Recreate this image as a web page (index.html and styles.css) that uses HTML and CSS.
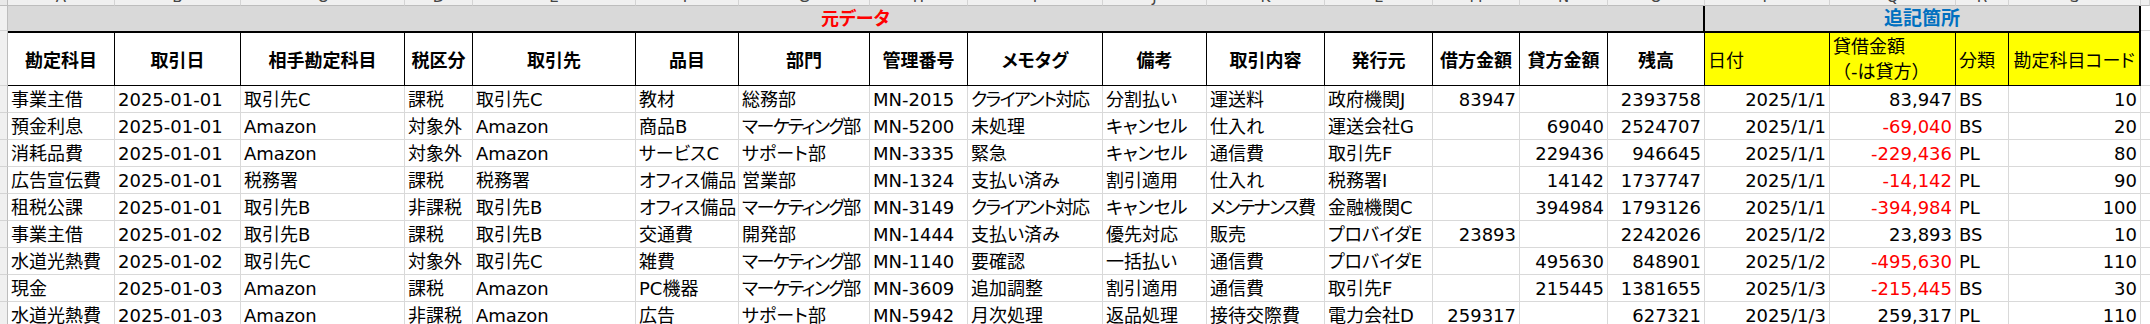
FILE: index.html
```html
<!DOCTYPE html>
<html lang="ja">
<head>
<meta charset="utf-8">
<title>Sheet</title>
<link rel="stylesheet" href="styles.css">
</head>
<body>
<div class="sheet">
  <div class="corner"></div>
  <div class="ch"><span>A</span></div><div class="ch"><span>B</span></div><div class="ch"><span>C</span></div><div class="ch"><span>D</span></div><div class="ch"><span>E</span></div><div class="ch"><span>F</span></div><div class="ch"><span>G</span></div><div class="ch"><span>H</span></div><div class="ch"><span>I</span></div><div class="ch"><span>J</span></div><div class="ch"><span>K</span></div><div class="ch"><span>L</span></div><div class="ch"><span>M</span></div><div class="ch"><span>N</span></div><div class="ch"><span>O</span></div><div class="ch"><span>P</span></div><div class="ch"><span>Q</span></div><div class="ch"><span>R</span></div><div class="ch"><span>S</span></div><div class="ch"></div>

  <div class="rh"></div>
  <div class="band band-main">元データ</div>
  <div class="band band-add">追記箇所</div>
  <div class="tail"></div>

  <div class="rh"></div>
  <div class="hd">勘定科目</div><div class="hd">取引日</div><div class="hd">相手勘定科目</div><div class="hd">税区分</div><div class="hd">取引先</div><div class="hd">品目</div><div class="hd">部門</div><div class="hd">管理番号</div><div class="hd">メモタグ</div><div class="hd">備考</div><div class="hd">取引内容</div><div class="hd">発行元</div><div class="hd">借方金額</div><div class="hd">貸方金額</div><div class="hd">残高</div>
  <div class="hd y">日付</div><div class="hd y"><span class="two">貸借金額<br>（-は貸方）</span></div><div class="hd y">分類</div><div class="hd y ctr last">勘定科目コード</div>
  <div class="tail"></div>

  <div class="rh"></div>
  <div class="c">事業主借</div><div class="c">2025-01-01</div><div class="c">取引先C</div><div class="c">課税</div><div class="c">取引先C</div><div class="c">教材</div><div class="c">総務部</div><div class="c">MN-2015</div><div class="c k">クライアント対応</div><div class="c">分割払い</div><div class="c">運送料</div><div class="c">政府機関J</div><div class="c r">83947</div><div class="c r"></div><div class="c r">2393758</div><div class="c r">2025/1/1</div><div class="c r">83,947</div><div class="c">BS</div><div class="c r">10</div>
  <div class="tail"></div>

  <div class="rh"></div>
  <div class="c">預金利息</div><div class="c">2025-01-01</div><div class="c">Amazon</div><div class="c">対象外</div><div class="c">Amazon</div><div class="c">商品B</div><div class="c k">マーケティング部</div><div class="c">MN-5200</div><div class="c">未処理</div><div class="c">キャンセル</div><div class="c">仕入れ</div><div class="c">運送会社G</div><div class="c r"></div><div class="c r">69040</div><div class="c r">2524707</div><div class="c r">2025/1/1</div><div class="c r neg">-69,040</div><div class="c">BS</div><div class="c r">20</div>
  <div class="tail"></div>

  <div class="rh"></div>
  <div class="c">消耗品費</div><div class="c">2025-01-01</div><div class="c">Amazon</div><div class="c">対象外</div><div class="c">Amazon</div><div class="c">サービスC</div><div class="c">サポート部</div><div class="c">MN-3335</div><div class="c">緊急</div><div class="c">キャンセル</div><div class="c">通信費</div><div class="c">取引先F</div><div class="c r"></div><div class="c r">229436</div><div class="c r">946645</div><div class="c r">2025/1/1</div><div class="c r neg">-229,436</div><div class="c">PL</div><div class="c r">80</div>
  <div class="tail"></div>

  <div class="rh"></div>
  <div class="c">広告宣伝費</div><div class="c">2025-01-01</div><div class="c">税務署</div><div class="c">課税</div><div class="c">税務署</div><div class="c">オフィス備品</div><div class="c">営業部</div><div class="c">MN-1324</div><div class="c">支払い済み</div><div class="c">割引適用</div><div class="c">仕入れ</div><div class="c">税務署I</div><div class="c r"></div><div class="c r">14142</div><div class="c r">1737747</div><div class="c r">2025/1/1</div><div class="c r neg">-14,142</div><div class="c">PL</div><div class="c r">90</div>
  <div class="tail"></div>

  <div class="rh"></div>
  <div class="c">租税公課</div><div class="c">2025-01-01</div><div class="c">取引先B</div><div class="c">非課税</div><div class="c">取引先B</div><div class="c">オフィス備品</div><div class="c k">マーケティング部</div><div class="c">MN-3149</div><div class="c k">クライアント対応</div><div class="c">キャンセル</div><div class="c k">メンテナンス費</div><div class="c">金融機関C</div><div class="c r"></div><div class="c r">394984</div><div class="c r">1793126</div><div class="c r">2025/1/1</div><div class="c r neg">-394,984</div><div class="c">PL</div><div class="c r">100</div>
  <div class="tail"></div>

  <div class="rh"></div>
  <div class="c">事業主借</div><div class="c">2025-01-02</div><div class="c">取引先B</div><div class="c">課税</div><div class="c">取引先B</div><div class="c">交通費</div><div class="c">開発部</div><div class="c">MN-1444</div><div class="c">支払い済み</div><div class="c">優先対応</div><div class="c">販売</div><div class="c">プロバイダE</div><div class="c r">23893</div><div class="c r"></div><div class="c r">2242026</div><div class="c r">2025/1/2</div><div class="c r">23,893</div><div class="c">BS</div><div class="c r">10</div>
  <div class="tail"></div>

  <div class="rh"></div>
  <div class="c">水道光熱費</div><div class="c">2025-01-02</div><div class="c">取引先C</div><div class="c">対象外</div><div class="c">取引先C</div><div class="c">雑費</div><div class="c k">マーケティング部</div><div class="c">MN-1140</div><div class="c">要確認</div><div class="c">一括払い</div><div class="c">通信費</div><div class="c">プロバイダE</div><div class="c r"></div><div class="c r">495630</div><div class="c r">848901</div><div class="c r">2025/1/2</div><div class="c r neg">-495,630</div><div class="c">PL</div><div class="c r">110</div>
  <div class="tail"></div>

  <div class="rh"></div>
  <div class="c">現金</div><div class="c">2025-01-03</div><div class="c">Amazon</div><div class="c">課税</div><div class="c">Amazon</div><div class="c">PC機器</div><div class="c k">マーケティング部</div><div class="c">MN-3609</div><div class="c">追加調整</div><div class="c">割引適用</div><div class="c">通信費</div><div class="c">取引先F</div><div class="c r"></div><div class="c r">215445</div><div class="c r">1381655</div><div class="c r">2025/1/3</div><div class="c r neg">-215,445</div><div class="c">BS</div><div class="c r">30</div>
  <div class="tail"></div>

  <div class="rh"></div>
  <div class="c">水道光熱費</div><div class="c">2025-01-03</div><div class="c">Amazon</div><div class="c">非課税</div><div class="c">Amazon</div><div class="c">広告</div><div class="c">サポート部</div><div class="c">MN-5942</div><div class="c">月次処理</div><div class="c">返品処理</div><div class="c">接待交際費</div><div class="c">電力会社D</div><div class="c r">259317</div><div class="c r"></div><div class="c r">627321</div><div class="c r">2025/1/3</div><div class="c r">259,317</div><div class="c">PL</div><div class="c r">110</div>
  <div class="tail"></div>
</div>
</body>
</html>
```

FILE: styles.css
```css
* {
  box-sizing: border-box;
}

html,
body {
  margin: 0;
  padding: 0;
  background: #ffffff;
}

body {
  width: 2150px;
  height: 324px;
  overflow: hidden;
  font-family: "DejaVu Sans", "Noto Sans CJK JP", sans-serif;
  font-size: 18px;
  color: #000000;
}

.sheet {
  display: grid;
  grid-template-columns: 8px 107px 126px 164px 68px 163px 103px 131px 98px 135px 104px 118px 108px 87px 88px 97px 125px 126px 53px 132px 1fr;
  grid-template-rows: 6px 25px 55px;
  grid-auto-rows: 27px;
  width: 2150px;
  font-feature-settings: "palt" 1;
}

/* Excel column-letter strip */
.corner {
  background: #e9e9e9;
  border-right: 1px solid #bdbdbd;
  border-bottom: 1px solid #bdbdbd;
}

.ch {
  background: #f0f0f0;
  border-right: 1px solid #d4d4d4;
  border-bottom: 1px solid #bdbdbd;
  overflow: hidden;
  display: flex;
  align-items: flex-end;
  justify-content: center;
  font-size: 15px;
  line-height: 15px;
  color: #444444;
}

/* row header column */
.rh {
  background: #f0f0f0;
  border-right: 1px solid #bdbdbd;
  border-bottom: 1px solid #d4d4d4;
}

/* title band */
.band {
  background: #d9d9d9;
  font-weight: 700;
  text-align: center;
  line-height: 25px;
  white-space: nowrap;
}

.band-main {
  grid-column: span 15;
  color: #ff0000;
  border-right: 2px solid #000000;
}

.band-add {
  grid-column: span 4;
  color: #0070c0;
  border-right: 2px solid #000000;
  font-size: 19px;
}

.tail {
  border-bottom: 1px solid #d9d9d9;
}

/* header row */
.hd {
  border-top: 2px solid #000000;
  border-bottom: 1px solid #000000;
  border-right: 1px solid #000000;
  display: flex;
  align-items: center;
  justify-content: center;
  font-weight: 700;
  white-space: nowrap;
  overflow: hidden;
  background: #ffffff;
}

.hd.y {
  background: #ffff00;
  font-weight: 400;
  justify-content: flex-start;
  padding-left: 3px;
}

.hd.ctr {
  justify-content: center;
  padding-left: 0;
}

.hd.last {
  border-right-width: 2px;
}

.two {
  line-height: 25px;
  font-feature-settings: normal;
}

/* data cells */
.c {
  border-right: 1px solid #d9d9d9;
  border-bottom: 1px solid #d9d9d9;
  padding: 1px 3px 0;
  line-height: 25px;
  white-space: nowrap;
  overflow: hidden;
}

.k {
  letter-spacing: -1.5px;
}

.r {
  text-align: right;
}

.neg {
  color: #ff0000;
}
```
